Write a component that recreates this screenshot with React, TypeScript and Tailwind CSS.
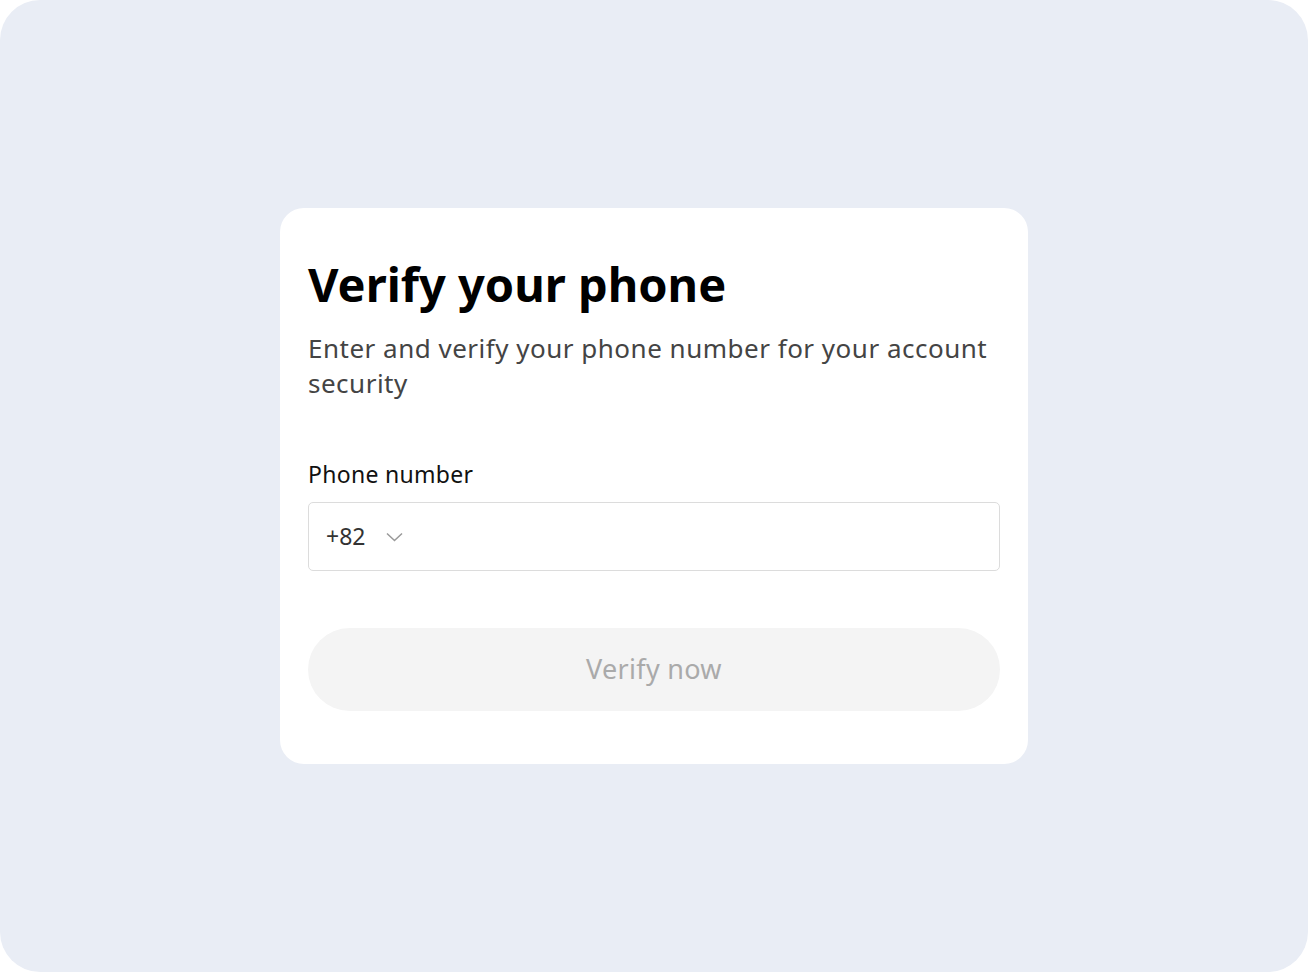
import React, { useState } from 'react';

const App = () => {
  const [phone, setPhone] = useState('');

  return (
    <div className="w-[1308px] h-[972px] bg-white">
      <div className="w-full h-full rounded-[40px] bg-[#e9edf5] flex items-center justify-center font-['Noto_Sans',sans-serif]">
        <div className="w-[748px] bg-white rounded-[24px] px-[28px] pt-[44px] pb-[53px] flex flex-col">
          {/* Heading */}
          <h1 className="text-[47px] leading-[64px] font-bold text-black">Verify your phone</h1>
          <p className="mt-[15px] text-[26px] leading-[35px] tracking-[0.5px] text-[#444444]">
            Enter and verify your phone number for your account security
          </p>

          {/* Phone field */}
          <label className="mt-[58px] text-[23px] leading-[30px] tracking-[0.3px] text-[#111111]">Phone number</label>
          <div className="mt-[13px] h-[69px] border border-[#dcdcdc] rounded-[5px] flex items-center px-[17px]">
            <button className="flex items-center gap-[21px] text-[23px] text-[#333333]">
              <span>+82</span>
              <svg width="17" height="10" viewBox="0 0 17 10" fill="none">
                <path d="M1 1.5 L8.5 8.5 L16 1.5" stroke="#999999" strokeWidth="1.5" />
              </svg>
            </button>
            <input
              value={phone}
              onChange={(e) => setPhone(e.target.value)}
              className="flex-1 ml-[12px] h-full outline-none text-[22px] bg-transparent"
            />
          </div>

          {/* Submit */}
          <button
            disabled
            className="mt-[57px] h-[83px] w-full rounded-full bg-[#f4f4f4] text-[27px] tracking-[0.3px] text-[#aaaaaa]"
          >
            Verify now
          </button>
        </div>
      </div>
    </div>
  );
};

export default App;
